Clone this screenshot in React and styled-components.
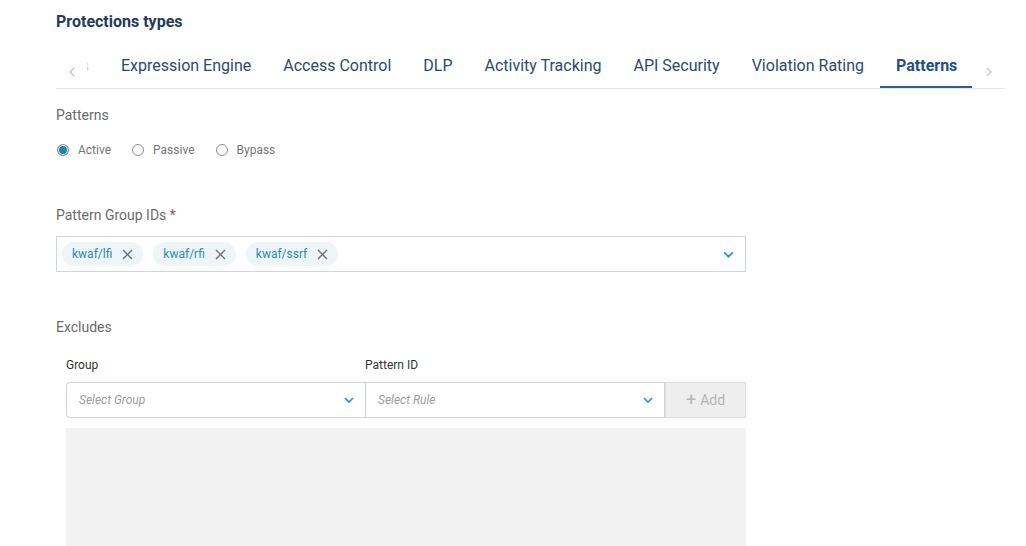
import React from 'react'
import styled, { createGlobalStyle } from 'styled-components'

const GlobalStyle = createGlobalStyle`
  body {
    margin: 0;
    background: #fff;
    font-family: Roboto, "Liberation Sans", Arial, sans-serif;
  }
`

const Page = styled.div`
  padding: 12px 0 0 56px;
  width: 949px;
`

const Heading = styled.h2`
  margin: 0;
  font-size: 16px;
  line-height: 20px;
  font-weight: 700;
  color: #233c5b;
`

const TabBar = styled.div`
  margin-top: 10px;
  display: flex;
  align-items: stretch;
  height: 46px;
  border-bottom: 1px solid #e4e6e9;
`

const ArrowButton = styled.div`
  width: ${({ w }) => w}px;
  flex: none;
  display: flex;
  align-items: center;
  justify-content: ${({ align }) => align};
  padding: 14px 0 0 ${({ pl }) => pl || 0}px;
  box-sizing: border-box;
  color: #b9bcc0;
`

const TabViewport = styled.div`
  flex: 1;
  display: flex;
  overflow: hidden;
`

const ClippedTab = styled.div`
  width: 18px;
  flex: none;
  overflow: hidden;
  display: flex;
  justify-content: flex-end;
`

const Tab = styled.div`
  position: relative;
  flex: none;
  padding: 0 16px;
  display: flex;
  align-items: center;
  font-size: 16px;
  white-space: nowrap;
  color: ${({ active, faded }) => (active ? '#24507f' : faded ? '#c8ccd1' : '#2d4a6d')};
  font-weight: ${({ active }) => (active ? 700 : 400)};

  &::after {
    content: '';
    position: absolute;
    left: 0;
    right: 0;
    bottom: -1px;
    height: 3px;
    background: ${({ active }) => (active ? '#2f5d8f' : 'transparent')};
  }
`

const Form = styled.div`
  width: 690px;
`

const SectionLabel = styled.div`
  font-size: 14px;
  line-height: 18px;
  color: #6b6b6b;
  margin-top: ${({ top }) => top}px;

  span {
    color: #e0393e;
  }
`

const RadioRow = styled.div`
  display: flex;
  gap: 21px;
  margin-top: 18px;
  padding-left: 1px;
`

const RadioOption = styled.label`
  display: flex;
  align-items: center;
  gap: 9px;
  font-size: 12px;
  line-height: 16px;
  color: #777;
`

const RadioDot = styled.span`
  width: 12px;
  height: 12px;
  box-sizing: border-box;
  border-radius: 50%;
  border: 1px solid ${({ checked }) => (checked ? '#9a9a9a' : '#8e8e8e')};
  background: ${({ checked }) => (checked ? '#1786b2' : '#fff')};
  box-shadow: ${({ checked }) => (checked ? 'inset 0 0 0 1px #fff' : 'none')};
`

const TagSelect = styled.div`
  margin-top: 12px;
  height: 36px;
  box-sizing: border-box;
  border: 1px solid #cdd6df;
  display: flex;
  align-items: center;
  padding: 0 10px 0 5px;
  gap: 10px;
`

const Chip = styled.div`
  height: 24px;
  border-radius: 12px;
  background: #edf5f8;
  display: flex;
  align-items: center;
  gap: 10px;
  padding: 0 10px 0 10px;
  font-size: 12px;
  color: #2a8cb6;
`

const Chevron = styled.svg`
  margin-left: auto;
  flex: none;
`

const FieldsRow = styled.div`
  margin: 21px 0 0 10px;
  display: grid;
  grid-template-columns: 299px 300px 81px;
`

const FieldLabel = styled.div`
  font-size: 12px;
  line-height: 16px;
  color: #333;
  padding-bottom: 9px;
`

const Dropdown = styled.div`
  height: 36px;
  box-sizing: border-box;
  border: 1px solid #cdd6df;
  border-right: ${({ last }) => (last ? '1px solid #cdd6df' : 'none')};
  border-radius: ${({ rounded }) => (rounded ? '4px 0 0 4px' : '0')};
  display: flex;
  align-items: center;
  padding: 0 10px 0 12px;
  font-size: 12px;
  font-style: italic;
  color: #9e9e9e;
`

const AddButton = styled.div`
  height: 36px;
  box-sizing: border-box;
  border: 1px solid #dedede;
  background: #eeeeee;
  display: flex;
  align-items: center;
  justify-content: center;
  gap: 4px;
  font-size: 14px;
  color: #b5b5b5;
`

const PlusSign = styled.span`
  font-size: 18px;
  line-height: 18px;
`

const EmptyTable = styled.div`
  margin: 10px 0 0 10px;
  height: 130px;
  background: #f2f2f2;
`

const ChevronDown = ({ color = '#1f9ac9', size = 12 }) => (
  <Chevron width={size} height={size} viewBox="0 0 12 12">
    <path d="M2 4 L6 8 L10 4" fill="none" stroke={color} strokeWidth="1.6" />
  </Chevron>
)

const CloseIcon = () => (
  <svg width="11" height="11" viewBox="0 0 11 11">
    <path d="M1 1 L10 10 M10 1 L1 10" stroke="#6f6f6f" strokeWidth="1.4" />
  </svg>
)

const tabs = [
  'Expression Engine',
  'Access Control',
  'DLP',
  'Activity Tracking',
  'API Security',
  'Violation Rating',
  'Patterns',
]

const chips = ['kwaf/lfi', 'kwaf/rfi', 'kwaf/ssrf']

export default function App() {
  return (
    <>
      <GlobalStyle />
      <Page>
        <Heading>Protections types</Heading>
        <TabBar>
          <ArrowButton w={31} align="flex-start" pl={12}>
            <svg width="8" height="10" viewBox="0 0 8 10">
              <path d="M6 1 L2 5 L6 9" fill="none" stroke="#b9bcc0" strokeWidth="1.2" />
            </svg>
          </ArrowButton>
          <TabViewport>
            <ClippedTab>
              <Tab faded>Signatures</Tab>
            </ClippedTab>
            {tabs.map((t) => (
              <Tab key={t} active={t === 'Patterns'}>
                {t}
              </Tab>
            ))}
          </TabViewport>
          <ArrowButton w={33} align="center">
            <svg width="8" height="10" viewBox="0 0 8 10">
              <path d="M2 1 L6 5 L2 9" fill="none" stroke="#c4c7cb" strokeWidth="1.2" />
            </svg>
          </ArrowButton>
        </TabBar>

        <Form>
          <SectionLabel top={17}>Patterns</SectionLabel>
          <RadioRow>
            <RadioOption>
              <RadioDot checked />
              Active
            </RadioOption>
            <RadioOption>
              <RadioDot />
              Passive
            </RadioOption>
            <RadioOption>
              <RadioDot />
              Bypass
            </RadioOption>
          </RadioRow>

          <SectionLabel top={48}>
            Pattern Group IDs <span>*</span>
          </SectionLabel>
          <TagSelect>
            {chips.map((c) => (
              <Chip key={c}>
                {c}
                <CloseIcon />
              </Chip>
            ))}
            <ChevronDown size={13} />
          </TagSelect>

          <SectionLabel top={46}>Excludes</SectionLabel>
          <FieldsRow>
            <div>
              <FieldLabel>Group</FieldLabel>
              <Dropdown rounded>
                Select Group
                <ChevronDown />
              </Dropdown>
            </div>
            <div>
              <FieldLabel>Pattern ID</FieldLabel>
              <Dropdown last>
                Select Rule
                <ChevronDown />
              </Dropdown>
            </div>
            <div>
              <FieldLabel>&nbsp;</FieldLabel>
              <AddButton>
                <PlusSign>+</PlusSign> Add
              </AddButton>
            </div>
          </FieldsRow>
          <EmptyTable />
        </Form>
      </Page>
    </>
  )
}
